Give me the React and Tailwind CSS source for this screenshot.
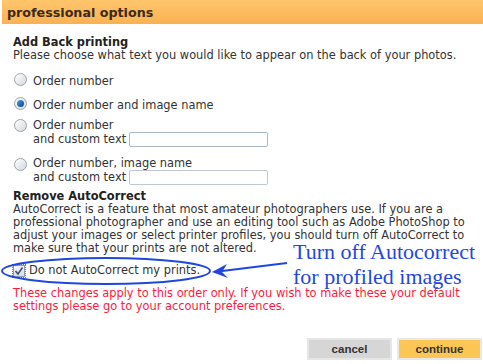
export default function App() {
  const font = { fontFamily: '"DejaVu Sans", Verdana, sans-serif' }
  return (
    <div className="relative w-[483px] h-[364px] bg-white text-[11.4px] leading-[13px] text-[#333]" style={font}>
      {/* header */}
      <div className="ml-[2px] h-[24px] bg-gradient-to-b from-[#ffc66c] to-[#f9b152] px-[5px] pt-[5px] text-[12.7px] leading-[15px] font-bold text-[#3b2a1c]">
        professional options
      </div>

      <div className="pl-[13px] pr-[8px]">
        <div className="mt-[12px] font-bold text-[#222]">Add Back printing</div>
        <div>Please choose what text you would like to appear on the back of your photos.</div>

        <div className="mt-[10px] flex flex-col">
          <label className="flex items-start gap-[6px]">
            <Radio />
            <span className="pt-[3px]">Order number</span>
          </label>
          <label className="mt-[8px] flex items-start gap-[6px]">
            <Radio checked />
            <span className="pt-[3px]">Order number and image name</span>
          </label>
          <label className="mt-[6px] flex items-start gap-[6px]">
            <Radio />
            <span className="pt-[1px]">
              Order number
              <span className="flex items-center gap-[3px]">
                and custom text
                <input className="w-[139px] h-[15px] border border-[#a9b8c9] rounded-[2px] outline-none" />
              </span>
            </span>
          </label>
          <label className="mt-[10px] flex items-start gap-[6px]">
            <Radio />
            <span>
              Order number, image name
              <span className="flex items-center gap-[3px]">
                and custom text
                <input className="w-[139px] h-[15px] border border-[#bfc8d2] rounded-[2px] outline-none" />
              </span>
            </span>
          </label>
        </div>

        <div className="mt-[5px] font-bold text-[#222]">Remove AutoCorrect</div>
        <div className="w-[468px]">
          AutoCorrect is a feature that most amateur photographers use. If you are a professional photographer and use an editing tool such as Adobe PhotoShop to adjust your images or select printer profiles, you should turn off AutoCorrect to make sure that your prints are not altered.
        </div>

        <label className="mt-[9px] flex items-center gap-[4px]">
          <span className="w-[12px] h-[12px] border border-[#8f9caf] outline outline-1 outline-dotted outline-[#777] bg-gradient-to-b from-[#f2f4f7] to-[#d9dee6] flex items-center justify-center">
            <svg width="10" height="10" viewBox="0 0 10 10">
              <path d="M1.5 5 L4 8 L8.5 1.5" fill="none" stroke="#3d4e70" strokeWidth="1.6" />
            </svg>
          </span>
          <span>Do not AutoCorrect my prints.</span>
        </label>

        <div className="mt-[10px] text-[#ff1a3c]">
          These changes apply to this order only. If you wish to make these your default settings please go to your account preferences.
        </div>
      </div>

      <div className="mt-[25px] flex justify-end gap-[5px] pr-[1px]">
        <button className="w-[85px] h-[22px] border-2 border-[#e6e6e6] bg-[#d6d6d6] text-[11.5px] font-bold text-[#333]" style={{ fontFamily: '"Liberation Sans", Arial, sans-serif' }}>
          cancel
        </button>
        <button className="w-[85px] h-[22px] border-2 border-[#e8e8e8] bg-[#fcc655] text-[11.5px] font-bold text-[#333]" style={{ fontFamily: '"Liberation Sans", Arial, sans-serif' }}>
          continue
        </button>
      </div>

      {/* annotation */}
      <svg className="absolute left-0 top-[250px]" width="300" height="40" viewBox="0 0 300 40">
        <ellipse cx="106" cy="21" rx="104" ry="13" fill="none" stroke="#1f47e0" strokeWidth="2" />
        <path d="M287 13 L214 22" stroke="#1f47e0" strokeWidth="1.8" fill="none" />
        <path d="M212 22 L227 14 L222 22 L228 28 Z" fill="#1f47e0" />
      </svg>
      <div className="absolute left-[293px] top-[242px] flex flex-col gap-[5px] text-[22px] leading-[20px] text-[#1f47e0]" style={{ fontFamily: '"Liberation Serif", serif' }}>
        <span>Turn off Autocorrect</span>
        <span>for profiled images</span>
      </div>
    </div>
  )
}

function Radio({ checked }) {
  return (
    <span className="mt-[1px] ml-[1px] w-[13px] h-[13px] rounded-full border border-[#9aa3ad] bg-gradient-to-br from-[#ffffff] to-[#d4d8dd] flex items-center justify-center shrink-0">
      {checked && <span className="w-[7px] h-[7px] rounded-full bg-gradient-to-br from-[#4aa3ea] to-[#0c3f86]" />}
    </span>
  )
}
